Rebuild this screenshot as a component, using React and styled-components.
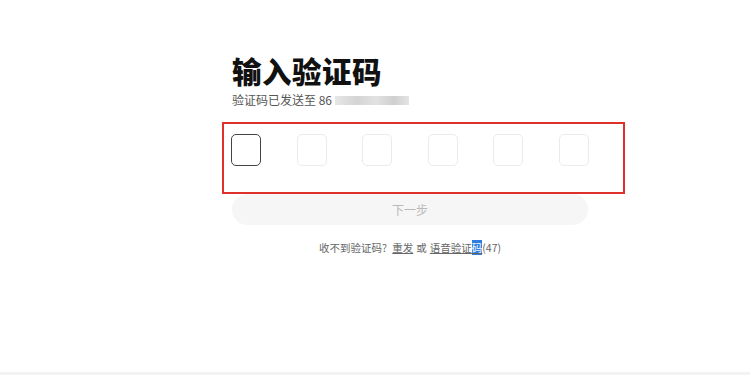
import React from 'react';
import styled, { createGlobalStyle } from 'styled-components';

const Global = createGlobalStyle`
  html, body { margin: 0; padding: 0; background: #fff; }
  body {
    font-family: "Noto Sans CJK SC", "Noto Sans", sans-serif;
    color: #222;
  }
`;

const Page = styled.div`
  width: 750px;
  height: 375px;
  box-sizing: border-box;
  border-bottom: 3px solid #f3f3f3;
  overflow: hidden;
`;

const Panel = styled.div`
  position: relative;
  width: 358px;
  margin-left: 231px;
  padding-top: 50px;
  display: flex;
  flex-direction: column;
`;

const Title = styled.h1`
  margin: 0 0 0 1px;
  font-size: 29.5px;
  line-height: 40px;
  font-weight: 900;
  color: #111;
  letter-spacing: 0.5px;
`;

const Sub = styled.div`
  margin: 2px 0 0 1px;
  display: flex;
  align-items: center;
  font-size: 12px;
  line-height: 16px;
  color: #555;
`;

const Blur = styled.span`
  display: inline-block;
  width: 74px;
  height: 9px;
  margin-left: 3px;
  background: linear-gradient(90deg, #e6e6e6 0%, #d4d4d4 30%, #e2e2e2 55%, #cfcfcf 80%, #e4e4e4 100%);
  filter: blur(0.6px);
`;

const Codes = styled.div`
  display: flex;
  justify-content: space-between;
  margin-top: 26px;
  height: 32px;
`;

const Cell = styled.div`
  width: 30px;
  height: 32px;
  box-sizing: border-box;
  border-radius: 5px;
  border: ${p => (p.$active ? '1.5px solid #444' : '1px solid #ebebeb')};
`;

const Mark = styled.div`
  position: absolute;
  left: -9px;
  top: 122px;
  width: 403px;
  height: 72px;
  box-sizing: border-box;
  border: 2px solid #e0302a;
  pointer-events: none;
`;

const NextBtn = styled.button`
  margin: 28px 0 0 1px;
  width: 356px;
  height: 31px;
  border: none;
  border-radius: 16px;
  background: #f6f6f6;
  color: #b9b9b9;
  font-family: inherit;
  font-size: 12px;
`;

const Hint = styled.div`
  margin-top: 15px;
  text-align: center;
  font-size: 10.5px;
  line-height: 16px;
  color: #666;
`;

const Link = styled.span`
  text-decoration: underline;
  color: #666;
  margin: 0 3px;
`;

const Sel = styled.span`
  background: #2f7de1;
  color: #fff;
`;

export default function App() {
  return (
    <Page>
      <Global />
      <Panel>
        <Title>输入验证码</Title>
        <Sub>验证码已发送至 86<Blur /></Sub>
        <Codes>
          {[0, 1, 2, 3, 4, 5].map(i => (
            <Cell key={i} $active={i === 0} />
          ))}
        </Codes>
        <Mark />
        <NextBtn>下一步</NextBtn>
        <Hint>
          收不到验证码? <Link>重发</Link>或<Link style={{ marginRight: 0 }}>语音验证<Sel>码</Sel></Link>(47)
        </Hint>
      </Panel>
    </Page>
  );
}
